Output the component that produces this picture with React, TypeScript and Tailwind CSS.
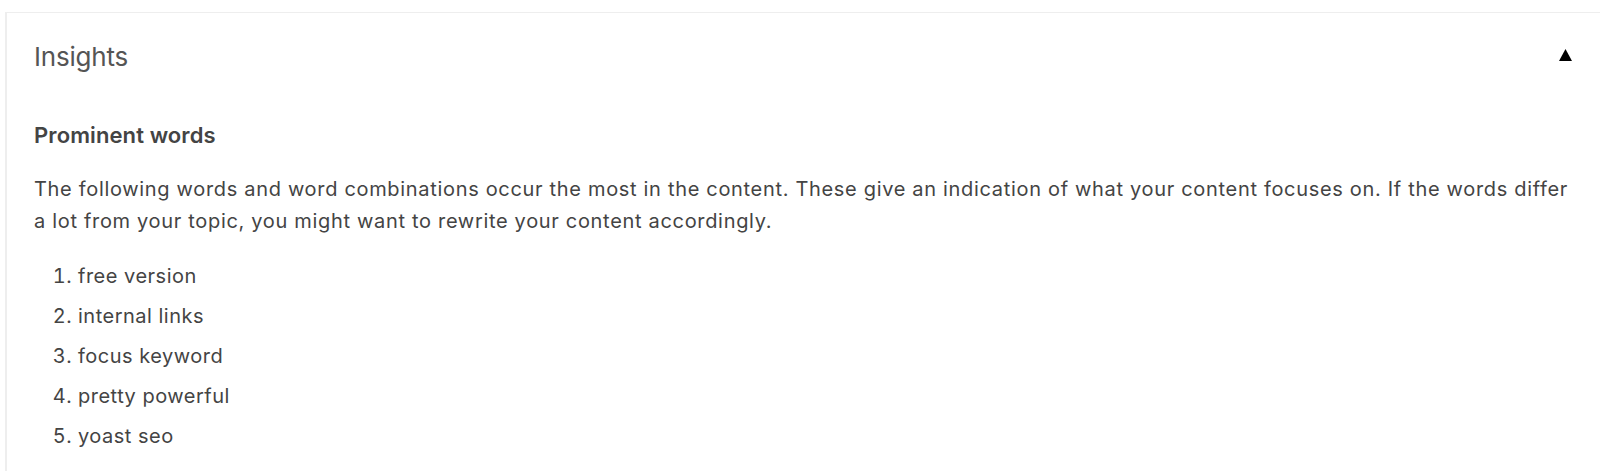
const words = ['free version', 'internal links', 'focus keyword', 'pretty powerful', 'yoast seo'];

export default function App() {
  return (
    <div className="h-[471px] w-full bg-white pl-[5px] font-['Inter',sans-serif] text-[#444]">
      <div className="mt-[12px] h-[459px] border-l-2 border-t border-[#eeeeee]">
        <div className="flex items-center justify-between pl-[27px] pr-[28px] pt-[30px]">
          <h2 className="text-[26px] leading-[27px] tracking-[-0.2px] text-[#555]">Insights</h2>
          <svg width="13" height="12" viewBox="0 0 13 12" className="mb-[3px]">
            <path d="M6.5 0 L13 12 L0 12 Z" fill="#000" />
          </svg>
        </div>

        <div className="px-[27px]">
          <h3 className="mt-[49px] text-[22px] font-semibold leading-[32px] tracking-[0.1px]">Prominent words</h3>
          <p className="mt-[22px] text-[20px] leading-[32px] tracking-[0.68px]">
            The following words and word combinations occur the most in the content. These give an indication of what
            your content focuses on. If the words differ a lot from your topic, you might want to rewrite your content
            accordingly.
          </p>
          <ol className="mt-[19px] list-decimal pl-[44px] text-[20px] leading-[40px] tracking-[0.5px]">
            {words.map((w) => (
              <li key={w}>{w}</li>
            ))}
          </ol>
        </div>
      </div>
    </div>
  );
}
